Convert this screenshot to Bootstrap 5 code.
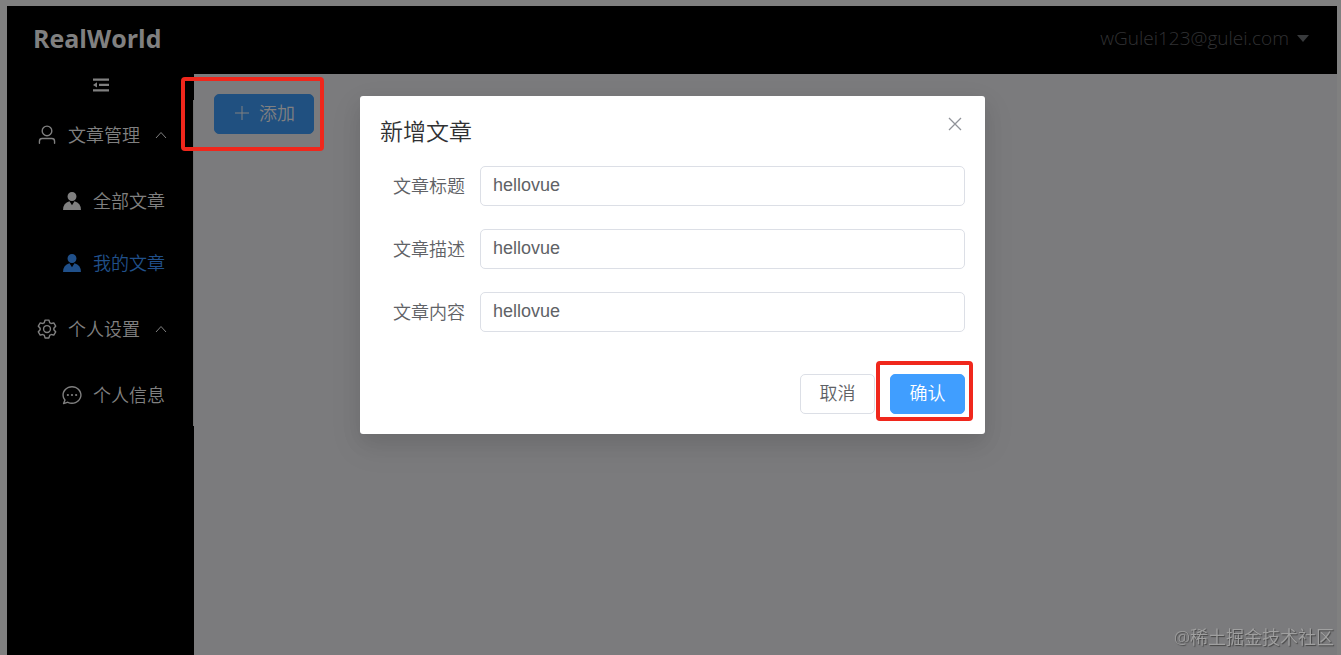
<!DOCTYPE html>
<html lang="zh-CN">
<head>
<meta charset="utf-8">
<meta name="viewport" content="width=device-width, initial-scale=1">
<title>RealWorld</title>
<link rel="stylesheet" href="https://cdn.jsdelivr.net/npm/bootstrap@5.3.0/dist/css/bootstrap.min.css">
<style>
  body {
    background: #808080;
    font-family: "Open Sans", "Noto Sans CJK SC", sans-serif;
    font-size: 18px;
    line-height: 24px;
    color: #606266;
  }
  .app-shell { padding: 6px 4px 0 7px; }
  .app-header { background: #000; height: 68px; padding: 0 28px 4px 26px; }
  .brand { color: #808080; font-size: 25px; font-weight: 700; text-decoration: none; }
  .user-menu { --bs-btn-color: #303133; --bs-btn-font-size: 19px; font-weight: 350; gap: 8px; }
  .user-menu::after { content: ""; border: 6px solid transparent; border-top: 7px solid #383a3c; border-bottom: 0; }
  .app-aside { background: #000; width: 187px; }
  .collapse-btn { height: 26px; padding: 0 0 4px; color: #808080; }
  .side-menu { border-right: 1px solid #737373; font-weight: 350; }
  .side-title, .side-item { color: #808080; gap: 6px; text-decoration: none; }
  .side-title { height: 70px; padding: 0 26px 0 25px; }
  .side-item { height: 62px; padding-left: 50px; }
  .side-item.current { color: #20508a; }
  .side-icon { width: 30px; text-align: center; line-height: 0; }
  .side-icon svg { width: 22px; height: 22px; }
  .app-main { background: #7b7b7d; padding: 20px; }
  .btn-add, .btn-cancel, .btn-ok {
    --bs-btn-font-size: 18px; --bs-btn-line-height: 24px; --bs-btn-border-radius: 5px;
    --bs-btn-padding-y: 0; --bs-btn-padding-x: 18px;
    height: 40px; min-width: 75px; padding-bottom: 2px; font-weight: 350;
  }
  .btn-add { --bs-btn-bg: #205080; --bs-btn-color: #808080; --bs-btn-border-color: #205080; --bs-btn-hover-bg: #205080; --bs-btn-hover-color: #909090; gap: 8px; }
  .btn-cancel { --bs-btn-color: #606266; --bs-btn-bg: #fff; --bs-btn-border-color: #dcdfe6; }
  .btn-ok { --bs-btn-color: #fff; --bs-btn-bg: #409eff; --bs-btn-border-color: #409eff; --bs-btn-hover-bg: #66b1ff; --bs-btn-hover-color: #fff; }
  /* red frames that point out a button */
  .hint::after { content: ""; position: absolute; border: 4px solid #f0271c; border-radius: 4px; pointer-events: none; }
  .hint-add::after { inset: -17px -10px -17px -33px; }
  .hint-ok::after { inset: -13px -8px -7px -14px; }
  .dialog-layer { padding: 96px 0 0 4px; pointer-events: none; }
  .dialog-box { width: 625px; max-width: 100%; padding: 20px; background: #fff; border-radius: 3px; box-shadow: 0 12px 32px 4px rgba(0,0,0,.06), 0 8px 20px rgba(0,0,0,.08); pointer-events: auto; }
  .dialog-title { font-size: 23px; line-height: 30px; font-weight: 350; color: #303133; }
  .dialog-close { color: #909399; line-height: 0; width: 20px; height: 16px; }
  .form-rows { gap: 23px; padding: 20px 0 42px; }
  .row-label { width: 100px; padding-right: 15px; text-align: right; font-weight: 350; }
  .row-input { height: 40px; padding: 0 12px 1px; border: 1px solid #dcdfe6; border-radius: 5px; color: #606266; font: 18px/24px "Liberation Sans", sans-serif; }
  .dialog-foot { gap: 15px; }
  .watermark { position: fixed; right: 7px; bottom: 6px; color: #a0a0a0; font-size: 18px; font-weight: 350; text-shadow: 1px 1px 1px #444; }
</style>
</head>
<body>
<div class="app-shell d-flex flex-column min-vh-100">
  <header class="app-header d-flex align-items-center justify-content-between">
    <a class="brand" href="#">RealWorld</a>
    <button type="button" class="user-menu btn p-0 border-0 d-flex align-items-center">wGulei123@gulei.com</button>
  </header>
  <div class="d-flex flex-grow-1">
    <aside class="app-aside flex-shrink-0">
      <button type="button" class="collapse-btn btn border-0 w-100 d-flex justify-content-center align-items-center" aria-label="收起菜单">
        <svg width="16" height="14" viewBox="0 0 16 14" fill="currentColor"><path d="M0 0.500h16v2.200H0zM6 5.800h10v2.200H6zM0 11.200h16v2.200H0zM0 6.900 4 4.200v5.400z"/></svg>
      </button>
      <nav class="side-menu d-flex flex-column">
        <a href="#" class="side-title d-flex align-items-center">
          <span class="side-icon"><svg viewBox="0 0 1024 1024" fill="currentColor"><path d="M512 512a192 192 0 1 0 0-384 192 192 0 0 0 0 384m0 64a256 256 0 1 1 0-512 256 256 0 0 1 0 512m320 320v-96a96 96 0 0 0-96-96H288a96 96 0 0 0-96 96v96a32 32 0 1 1-64 0v-96a160 160 0 0 1 160-160h448a160 160 0 0 1 160 160v96a32 32 0 1 1-64 0"/></svg></span>
          <span>文章管理</span>
          <svg class="ms-auto" width="12" height="8" viewBox="0 0 12 8" fill="none" stroke="currentColor"><path d="M1 7l5-5.500L11 7"/></svg>
        </a>
        <a href="#" class="side-item d-flex align-items-center">
          <span class="side-icon"><svg viewBox="0 0 1024 1024" fill="currentColor"><path d="M628.736 528.896A416 416 0 0 1 928 928H96a415.872 415.872 0 0 1 299.264-399.104L512 704zM720 304a208 208 0 1 1-416 0 208 208 0 0 1 416 0"/></svg></span>
          <span>全部文章</span>
        </a>
        <a href="#" class="side-item current d-flex align-items-center">
          <span class="side-icon"><svg viewBox="0 0 1024 1024" fill="currentColor"><path d="M628.736 528.896A416 416 0 0 1 928 928H96a415.872 415.872 0 0 1 299.264-399.104L512 704zM720 304a208 208 0 1 1-416 0 208 208 0 0 1 416 0"/></svg></span>
          <span>我的文章</span>
        </a>
        <a href="#" class="side-title d-flex align-items-center">
          <span class="side-icon"><svg viewBox="0 0 1024 1024" fill="currentColor"><path d="M600.704 64a32 32 0 0 1 30.464 22.208l35.2 109.376c14.784 7.232 28.928 15.36 42.432 24.512l112.384-24.192a32 32 0 0 1 34.432 15.36L944.32 364.8a32 32 0 0 1-4.032 37.504l-77.12 85.12a357.12 357.12 0 0 1 0 49.024l77.12 85.248a32 32 0 0 1 4.032 37.504l-88.704 153.6a32 32 0 0 1-34.432 15.296L708.8 803.904c-13.44 9.088-27.648 17.28-42.368 24.512l-35.264 109.376A32 32 0 0 1 600.704 960H423.296a32 32 0 0 1-30.464-22.208L357.696 828.48a351.616 351.616 0 0 1-42.56-24.64l-112.32 24.256a32 32 0 0 1-34.432-15.36L79.68 659.2a32 32 0 0 1 4.032-37.504l77.12-85.248a357.12 357.12 0 0 1 0-48.896l-77.12-85.248A32 32 0 0 1 79.68 364.8l88.704-153.6a32 32 0 0 1 34.432-15.296l112.32 24.256c13.568-9.152 27.776-17.408 42.56-24.64l35.2-109.312A32 32 0 0 1 423.232 64H600.64zm-23.424 64H446.72l-36.352 113.088-24.512 11.968a294.113 294.113 0 0 0-34.816 20.096l-22.656 15.36-116.224-25.088-65.28 113.152 79.68 88.192-1.92 27.136a293.12 293.12 0 0 0 0 40.192l1.92 27.136-79.808 88.192 65.344 113.152 116.224-25.024 22.656 15.296a294.113 294.113 0 0 0 34.816 20.096l24.512 11.968L446.72 896h130.688l36.48-113.152 24.448-11.904a288.282 288.282 0 0 0 34.752-20.096l22.592-15.296 116.288 25.024 65.28-113.152-79.744-88.192 1.92-27.136a293.12 293.12 0 0 0 0-40.256l-1.92-27.136 79.808-88.128-65.344-113.152-116.288 24.96-22.592-15.232a287.616 287.616 0 0 0-34.752-20.096l-24.448-11.904L577.344 128zM512 320a192 192 0 1 1 0 384 192 192 0 0 1 0-384m0 64a128 128 0 1 0 0 256 128 128 0 0 0 0-256"/></svg></span>
          <span>个人设置</span>
          <svg class="ms-auto" width="12" height="8" viewBox="0 0 12 8" fill="none" stroke="currentColor"><path d="M1 7l5-5.500L11 7"/></svg>
        </a>
        <a href="#" class="side-item d-flex align-items-center">
          <span class="side-icon"><svg viewBox="0 0 1024 1024" fill="currentColor"><path d="m174.720 855.680 135.296-45.120 23.680 11.840C388.096 849.536 448.576 864 512 864c211.840 0 384-166.784 384-352S723.840 160 512 160 128 326.784 128 512c0 69.120 24.960 139.264 70.848 199.232l22.080 28.800-46.272 115.584zm-45.248 82.560A32 32 0 0 1 89.600 896l58.368-145.920C94.720 680.320 64 596.864 64 512 64 299.904 256 96 512 96s448 203.904 448 416-192 416-448 416a461.056 461.056 0 0 1-206.912-48.384z"/><circle cx="320" cy="512" r="51"/><circle cx="512" cy="512" r="51"/><circle cx="704" cy="512" r="51"/></svg></span>
          <span>个人信息</span>
        </a>
      </nav>
    </aside>
    <main class="app-main flex-grow-1">
      <span class="hint hint-add position-relative d-inline-block">
        <button type="button" class="btn btn-add d-flex align-items-center">
          <svg width="18" height="18" viewBox="0 0 18 18" fill="none" stroke="currentColor"><path d="M9 2v14M2 9h14"/></svg>
          添加
        </button>
      </span>
    </main>
  </div>
</div>

<div class="dialog-layer position-absolute top-0 start-0 w-100 d-flex justify-content-center">
  <form class="dialog-box" role="dialog" aria-labelledby="dialogTitle">
    <div class="d-flex justify-content-between">
      <h1 class="dialog-title m-0" id="dialogTitle">新增文章</h1>
      <button type="button" class="dialog-close btn p-0 border-0" aria-label="关闭">
        <svg width="14" height="14" viewBox="0 0 14 14" fill="none" stroke="currentColor" stroke-width="1.300"><path d="M1 1l12 12M13 1L1 13"/></svg>
      </button>
    </div>
    <div class="form-rows d-flex flex-column">
      <div class="d-flex align-items-center">
        <label class="row-label flex-shrink-0" for="fTitle">文章标题</label>
        <input class="row-input form-control" id="fTitle" type="text" value="hellovue">
      </div>
      <div class="d-flex align-items-center">
        <label class="row-label flex-shrink-0" for="fDesc">文章描述</label>
        <input class="row-input form-control" id="fDesc" type="text" value="hellovue">
      </div>
      <div class="d-flex align-items-center">
        <label class="row-label flex-shrink-0" for="fBody">文章内容</label>
        <input class="row-input form-control" id="fBody" type="text" value="hellovue">
      </div>
    </div>
    <div class="dialog-foot d-flex justify-content-end">
      <button type="button" class="btn btn-cancel">取消</button>
      <span class="hint hint-ok position-relative"><button type="submit" class="btn btn-ok">确认</button></span>
    </div>
  </form>
</div>
<div class="watermark">@稀土掘金技术社区</div>
<script src="https://cdn.jsdelivr.net/npm/bootstrap@5.3.0/dist/js/bootstrap.bundle.min.js"></script>
</body>
</html>
